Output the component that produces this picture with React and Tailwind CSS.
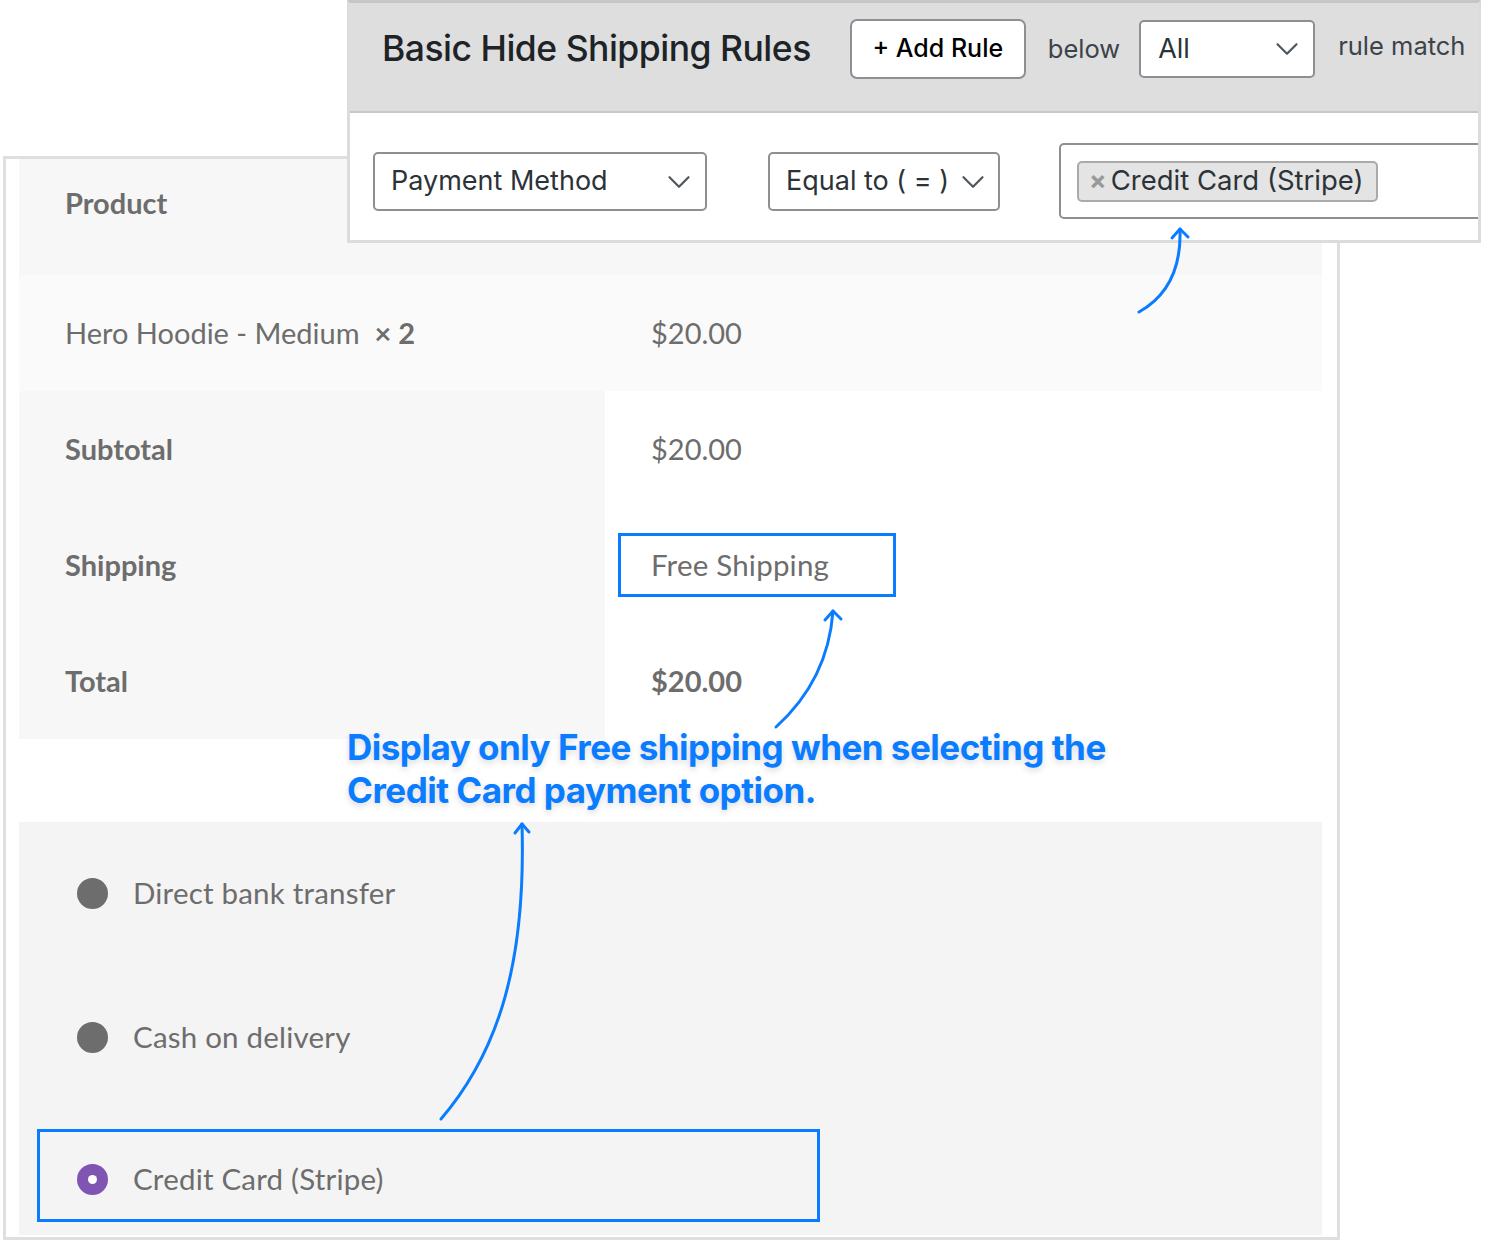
import { ChevronDown } from 'lucide-react';

const adminFont = { fontFamily: 'Inter, "Noto Sans", sans-serif' };
const shopFont = { fontFamily: 'Lato, "Noto Sans", sans-serif' };

const SelectBox = ({ label, className }) => (
    <div className={`flex shrink-0 items-center justify-between rounded-[5px] border-2 border-[#8c8f94] bg-white ${className}`}>
        <span className="whitespace-nowrap text-[27px] text-[#2c3338]">{label}</span>
        <ChevronDown size={38} strokeWidth={1.4} className="-mx-[9px] shrink-0 text-[#50575e]" />
    </div>
);

const Row = ({ label, value, bold, shaded, split }) => (
    <div className={`flex h-[116px] items-center ${shaded ? 'bg-[#fafafa]' : ''}`}>
        <div className={`flex h-full w-[586px] items-center pl-[46px] ${split ? 'bg-[#f7f7f7]' : ''}`}>
            <span className={`text-[29px] text-[#6d6d6d] ${bold ? 'font-bold' : ''}`}>{label}</span>
        </div>
        <div className="pl-[46px]">{value}</div>
    </div>
);

const PaymentOption = ({ label, checked }) => (
    <div className="flex items-center gap-[25px]">
        {checked ? (
            <span className="flex h-[31px] w-[31px] items-center justify-center rounded-full bg-[#7f54b3]">
                <span className="h-[9px] w-[9px] rounded-full bg-white" />
            </span>
        ) : (
            <span className="h-[31px] w-[31px] rounded-full bg-[#6d6d6d]" />
        )}
        <span className="text-[29.5px] tracking-[0.2px] text-[#6d6d6d]">{label}</span>
    </div>
);

export default function App() {
    return (
        <div className="relative h-[1240px] w-[1485px] overflow-hidden bg-white">
            {/* checkout */}
            <div className="ml-[3px] mt-[156px] h-[1084px] w-[1337px] border-[3px] border-[#dfdfdf] bg-white pl-[13px] pr-[15px]" style={shopFont}>
                <div className="flex h-[116px] items-center bg-[#f7f7f7] pb-[28px] pl-[46px]">
                    <span className="text-[29px] font-bold text-[#6d6d6d]">Product</span>
                </div>
                <Row
                    shaded
                    label={<>Hero Hoodie - Medium&nbsp;&nbsp;<span className="font-bold">× 2</span></>}
                    value={<span className="text-[29px] text-[#6d6d6d]">$20.00</span>}
                />
                <Row split bold label="Subtotal" value={<span className="text-[29px] text-[#6d6d6d]">$20.00</span>} />
                <Row
                    split
                    bold
                    label="Shipping"
                    value={
                        <div className="-ml-[33px] flex h-[64px] w-[278px] items-center border-[3px] border-[#0a7cff] pl-[30px]">
                            <span className="text-[29.5px] tracking-[0.2px] text-[#6d6d6d]">Free Shipping</span>
                        </div>
                    }
                />
                <Row split bold label="Total" value={<span className="text-[29px] font-bold text-[#6d6d6d]">$20.00</span>} />

                <div className="mt-[83px] h-[413px] bg-[#f4f4f4] pt-[41px]">
                    <div className="flex h-[60px] items-center pl-[58px]">
                        <PaymentOption label="Direct bank transfer" />
                    </div>
                    <div className="mt-[84px] flex h-[60px] items-center pl-[58px]">
                        <PaymentOption label="Cash on delivery" />
                    </div>
                    <div className="ml-[18px] mt-[62px] flex h-[93px] w-[783px] items-center border-[3px] border-[#0a7cff] pl-[37px] pt-[8px]">
                        <PaymentOption checked label="Credit Card (Stripe)" />
                    </div>
                </div>
            </div>

            {/* rule panel */}
            <div className="absolute left-[347px] top-0 h-[243px] w-[1134px] overflow-hidden border-[3px] border-[#dcdcdc] border-t-[#c6c6c6] bg-white" style={adminFont}>
                <div className="flex h-[110px] items-start border-b-2 border-[#c8c8c8] bg-[#dedede] pl-[32px] pt-[16px]">
                    <div className="flex h-[60px] items-center">
                        <h1 className="whitespace-nowrap text-[35.5px] font-medium tracking-[-0.5px] text-[#1d2327]">Basic Hide Shipping Rules</h1>
                        <button className="ml-[39px] flex h-[60px] w-[176px] shrink-0 items-center justify-center rounded-[7px] border-2 border-[#8c8f94] bg-white text-[25px] font-medium text-black">
                            + Add Rule
                        </button>
                        <span className="ml-[22px] text-[25.5px] text-[#3c434a]">below</span>
                        <SelectBox label="All" className="ml-[19px] h-[58px] w-[176px] pl-[17px] pr-[16px]" />
                        <span className="ml-[23px] -mt-[6px] whitespace-nowrap text-[25.5px] text-[#3c434a]">rule match</span>
                    </div>
                </div>
                <div className="flex items-start pl-[23px]">
                    <SelectBox label="Payment Method" className="mt-[39px] h-[59px] w-[334px] pl-[16px] pr-[16px]" />
                    <SelectBox label="Equal to ( = )" className="ml-[61px] mt-[39px] h-[59px] w-[232px] pl-[16px] pr-[15px]" />
                    <div className="ml-[59px] mt-[30px] flex h-[76px] w-[460px] shrink-0 items-center rounded-[5px] border-2 border-[#8c8f94] pl-[16px]">
                        <div className="flex h-[41px] items-center rounded-[5px] border-2 border-[#aaaaaa] bg-[#e4e4e4] pl-[10px] pr-[12px]">
                            <span className="mr-[4px] text-[26px] font-bold leading-none text-[#999999]">×</span>
                            <span className="whitespace-nowrap text-[27.5px] text-[#2c3338]">Credit Card (Stripe)</span>
                        </div>
                    </div>
                </div>
            </div>

            {/* annotation */}
            <p
                className="absolute left-[347px] top-[726px] text-[35px] font-bold leading-[43px] tracking-[-0.5px] text-[#0a7cff] [text-shadow:0_3px_6px_rgba(0,0,0,0.15)]"
                style={adminFont}
            >
                Display only Free shipping when selecting the
                <br />
                Credit Card payment option.
            </p>

            <svg className="pointer-events-none absolute left-0 top-0" width="1485" height="1240" fill="none" stroke="#0a7cff" strokeWidth="3" strokeLinecap="round" strokeLinejoin="round">
                <path d="M1139 312 Q1182 288 1180 229" />
                <path d="M1172 238 L1180 229 L1188 237" />
                <path d="M776 727 Q828 680 833 611" />
                <path d="M825 620 L833 611 L841 619" />
                <path d="M441 1119 C500 1050 526 960 522 824" />
                <path d="M515 833 L522 824 L529 832" />
            </svg>
        </div>
    );
}
